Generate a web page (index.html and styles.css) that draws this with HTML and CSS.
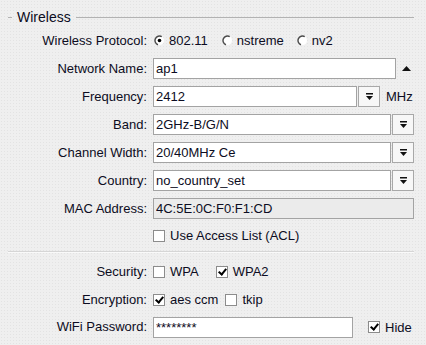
FILE: index.html
```html
<!DOCTYPE html>
<html lang="en">
<head>
    <meta charset="UTF-8">
    <meta name="viewport" content="width=device-width, initial-scale=1.0">
    <title>Wireless</title>
    <link rel="stylesheet" href="styles.css">
</head>
<body>
    <div class="panel">
        <div class="section-title"><span>Wireless</span></div>

        <div class="form">
            <div class="lbl">Wireless Protocol:</div>
            <div class="ctl">
                <span class="opt proto1">
                    <svg class="radio" width="11" height="11" viewBox="0 0 11 11"><circle cx="5.5" cy="5.5" r="4.5" fill="#fff"/><path d="M7.75 1.6 A4.5 4.5 0 1 0 3.96 9.73" fill="none" stroke="#4a4a4a" stroke-width="1.4"/><circle cx="5.5" cy="5.5" r="1.8" fill="#000"/></svg>
                    802.11
                </span>
                <span class="opt proto2">
                    <svg class="radio" width="11" height="11" viewBox="0 0 11 11"><circle cx="5.5" cy="5.5" r="4.5" fill="#fff"/><path d="M7.75 1.6 A4.5 4.5 0 1 0 3.96 9.73" fill="none" stroke="#4a4a4a" stroke-width="1.4"/></svg>
                    nstreme
                </span>
                <span class="opt">
                    <svg class="radio" width="11" height="11" viewBox="0 0 11 11"><circle cx="5.5" cy="5.5" r="4.5" fill="#fff"/><path d="M7.75 1.6 A4.5 4.5 0 1 0 3.96 9.73" fill="none" stroke="#4a4a4a" stroke-width="1.4"/></svg>
                    nv2
                </span>
            </div>

            <div class="lbl">Network Name:</div>
            <div class="ctl">
                <input class="field w-name" type="text" value="ap1">
                <svg class="up" width="9" height="5" viewBox="0 0 9 5"><path d="M0 5 L4.5 0 L9 5 Z" fill="#111"/></svg>
            </div>

            <div class="lbl">Frequency:</div>
            <div class="ctl">
                <input class="field w-freq" type="text" value="2412">
                <span class="drop"><svg width="9" height="8" viewBox="0 0 9 8"><rect x="1" y="0" width="7" height="1.5" fill="#111"/><path d="M1 3 L8 3 L4.5 7 Z" fill="#111"/></svg></span>
                <span class="unit">MHz</span>
            </div>

            <div class="lbl">Band:</div>
            <div class="ctl">
                <input class="field w-sel" type="text" value="2GHz-B/G/N">
                <span class="drop"><svg width="9" height="8" viewBox="0 0 9 8"><rect x="1" y="0" width="7" height="1.5" fill="#111"/><path d="M1 3 L8 3 L4.5 7 Z" fill="#111"/></svg></span>
            </div>

            <div class="lbl">Channel Width:</div>
            <div class="ctl">
                <input class="field w-sel" type="text" value="20/40MHz Ce">
                <span class="drop"><svg width="9" height="8" viewBox="0 0 9 8"><rect x="1" y="0" width="7" height="1.5" fill="#111"/><path d="M1 3 L8 3 L4.5 7 Z" fill="#111"/></svg></span>
            </div>

            <div class="lbl">Country:</div>
            <div class="ctl">
                <input class="field w-sel" type="text" value="no_country_set">
                <span class="drop"><svg width="9" height="8" viewBox="0 0 9 8"><rect x="1" y="0" width="7" height="1.5" fill="#111"/><path d="M1 3 L8 3 L4.5 7 Z" fill="#111"/></svg></span>
            </div>

            <div class="lbl">MAC Address:</div>
            <div class="ctl">
                <input class="field w-full readonly" type="text" value="4C:5E:0C:F0:F1:CD" readonly>
            </div>

            <div class="lbl"></div>
            <div class="ctl acl">
                <span class="opt"><span class="check"></span>Use Access List (ACL)</span>
            </div>
        </div>

        <div class="sep"></div>

        <div class="form">
            <div class="lbl">Security:</div>
            <div class="ctl">
                <span class="opt sec1"><span class="check"></span>WPA</span>
                <span class="opt"><span class="check on"></span>WPA2</span>
            </div>

            <div class="lbl">Encryption:</div>
            <div class="ctl">
                <span class="opt enc1"><span class="check on"></span>aes ccm</span>
                <span class="opt"><span class="check"></span>tkip</span>
            </div>

            <div class="lbl pass">WiFi Password:</div>
            <div class="ctl pass">
                <input class="field w-pass" type="text" value="********">
                <span class="opt hide"><span class="check on"></span>Hide</span>
            </div>
        </div>
    </div>
</body>
</html>
```

FILE: styles.css
```css
body {
    margin: 0;
    padding-top: 8px;
    font-family: "Liberation Sans", Arial, sans-serif;
    font-size: 13px;
    color: #0c0c22;
    background-color: #efefef;
    background-image: radial-gradient(#e3e3e3 0.7px, transparent 0.9px);
    background-size: 3px 3px;
}
.panel {
    margin-left: 8px;
    width: 406px;
}
.section-title {
    display: flex;
    align-items: center;
    height: 18px;
    margin-bottom: 4px;
    font-size: 14px;
}
.section-title::before,
.section-title::after {
    content: "";
    height: 1px;
    background: #b2b2b2;
}
.section-title::before {
    width: 4px;
    margin-right: 5px;
}
.section-title::after {
    flex: 1;
    margin-left: 5px;
}
.form {
    display: grid;
    grid-template-columns: 139px 1fr;
    column-gap: 6px;
    row-gap: 7px;
    grid-auto-rows: 21px;
}
.lbl {
    text-align: right;
    line-height: 21px;
    white-space: nowrap;
}
.ctl {
    display: flex;
    align-items: center;
    white-space: nowrap;
}
.acl {
    margin-top: -2px;
}
.pass {
    margin-top: -1px;
}
.field {
    box-sizing: border-box;
    height: 21px;
    margin: 0;
    padding: 0 2px;
    border: 1px solid #a3a3a3;
    background: #fff;
    font-family: inherit;
    font-size: 13px;
    color: #0c0c22;
    outline: none;
}
.readonly {
    background: #ebebeb;
}
.w-name { width: 243px; }
.w-freq { width: 204px; }
.w-sel { width: 238px; }
.w-full { width: 261px; }
.w-pass { width: 200px; }
.up {
    margin-left: 6px;
}
.drop {
    box-sizing: border-box;
    width: 22px;
    height: 21px;
    margin-left: 1px;
    border: 1px solid #a8a8a8;
    background: #f7f7f7;
    display: flex;
    align-items: center;
    justify-content: center;
}
.unit {
    margin-left: 6px;
}
.opt {
    display: inline-flex;
    align-items: center;
}
.radio {
    margin: 0 4px 0 1px;
}
.proto1 { margin-right: 13px; }
.proto2 { margin-right: 12px; }
.check {
    box-sizing: border-box;
    width: 12px;
    height: 12px;
    margin-right: 5px;
    border: 1px solid #8c8c8c;
    background: #fff;
    position: relative;
}
.check.on::after {
    content: "";
    position: absolute;
    left: 3px;
    top: 0px;
    width: 3px;
    height: 6px;
    border: solid #000;
    border-width: 0 2px 2px 0;
    transform: rotate(40deg);
}
.sec1 { margin-right: 17px; }
.enc1 { margin-right: 7px; }
.hide { margin-left: 15px; }
.sep {
    height: 1px;
    margin: 4px 0 8px;
    background: #d6d6d6;
    border-bottom: 1px solid #fafafa;
}
```
